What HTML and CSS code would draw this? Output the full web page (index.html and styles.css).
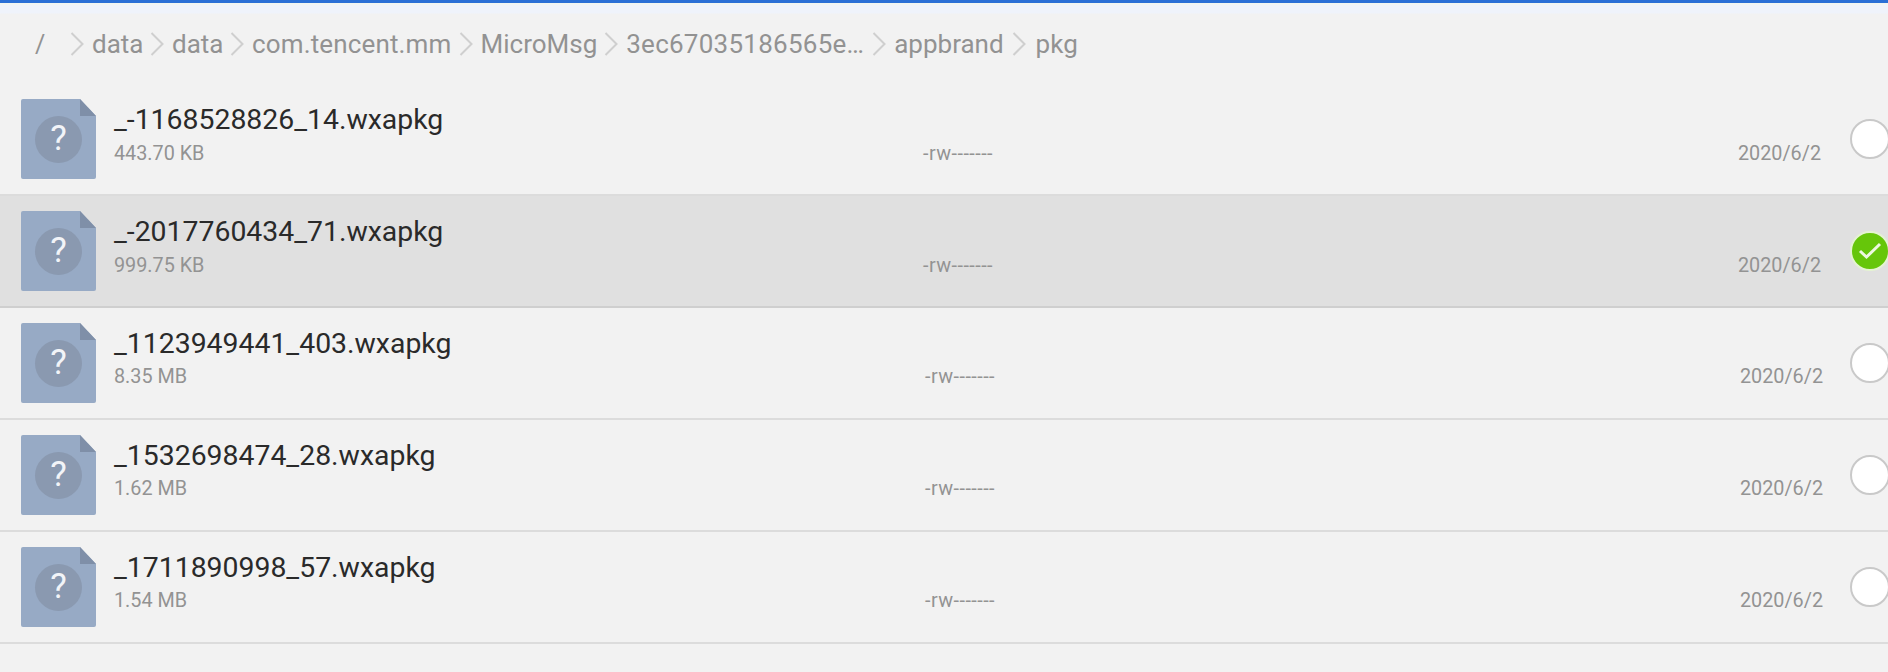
FILE: index.html
```html
<!DOCTYPE html>
<html lang="en">
<head>
<meta charset="utf-8">
<title>pkg</title>
<link rel="stylesheet" href="styles.css">
</head>
<body>
<svg class="defs" width="0" height="0" aria-hidden="true">
  <defs>
    <symbol id="chev" viewBox="0 0 14 24"><path d="M1.5 1 L12.5 12 L1.5 23" fill="none" stroke="#cfcfcf" stroke-width="2"/></symbol>
    <symbol id="file" viewBox="0 0 75 80">
      <path d="M2 0H59L75 17V78a2 2 0 0 1-2 2H2a2 2 0 0 1-2-2V2a2 2 0 0 1 2-2Z" fill="#97aac5"/>
      <path d="M59 0L75 17H59Z" fill="#7f8fa8"/>
      <circle cx="37.5" cy="40.500" r="23.500" fill="#8a99b0"/>
    </symbol>
  </defs>
</svg>
<header class="crumbs">
  <span class="root">/</span>
  <svg class="chev"><use href="#chev"/></svg><span>data</span>
  <svg class="chev tight"><use href="#chev"/></svg><span>data</span>
  <svg class="chev tight"><use href="#chev"/></svg><span class="wide">com.tencent.mm</span>
  <svg class="chev near"><use href="#chev"/></svg><span>MicroMsg</span>
  <svg class="chev near"><use href="#chev"/></svg><span class="wider">3ec67035186565e…</span>
  <svg class="chev far"><use href="#chev"/></svg><span>appbrand</span>
  <svg class="chev"><use href="#chev"/></svg><span class="last">pkg</span>
</header>
<main class="list">
  <div class="row">
    <div class="icon"><svg class="file"><use href="#file"/></svg><span class="q">?</span></div>
    <div class="info"><div class="name">_-1168528826_14.wxapkg</div>
      <div class="meta"><span class="size">443.70 KB</span><span class="perm">-rw-------</span><span class="date">2020/6/2</span></div></div>
    <div class="radio"></div>
  </div>
  <div class="row selected">
    <div class="icon"><svg class="file"><use href="#file"/></svg><span class="q">?</span></div>
    <div class="info"><div class="name">_-2017760434_71.wxapkg</div>
      <div class="meta"><span class="size">999.75 KB</span><span class="perm">-rw-------</span><span class="date">2020/6/2</span></div></div>
    <div class="radio checked"><svg viewBox="0 0 40 40" class="tick"><path d="M10 20L16.500 26L30 13" fill="none" stroke="#eef8e0" stroke-width="3"/></svg></div>
  </div>
  <div class="row shifted">
    <div class="icon"><svg class="file"><use href="#file"/></svg><span class="q">?</span></div>
    <div class="info"><div class="name">_1123949441_403.wxapkg</div>
      <div class="meta"><span class="size">8.35 MB</span><span class="perm">-rw-------</span><span class="date">2020/6/2</span></div></div>
    <div class="radio"></div>
  </div>
  <div class="row shifted">
    <div class="icon"><svg class="file"><use href="#file"/></svg><span class="q">?</span></div>
    <div class="info"><div class="name">_1532698474_28.wxapkg</div>
      <div class="meta"><span class="size">1.62 MB</span><span class="perm">-rw-------</span><span class="date">2020/6/2</span></div></div>
    <div class="radio"></div>
  </div>
  <div class="row shifted">
    <div class="icon"><svg class="file"><use href="#file"/></svg><span class="q">?</span></div>
    <div class="info"><div class="name">_1711890998_57.wxapkg</div>
      <div class="meta"><span class="size">1.54 MB</span><span class="perm">-rw-------</span><span class="date">2020/6/2</span></div></div>
    <div class="radio"></div>
  </div>
</main>
</body>
</html>
```
FILE: styles.css
```css
* { box-sizing: border-box; }
html, body { margin: 0; height: 100%; }
body {
  width: 1888px;
  height: 672px;
  overflow: hidden;
  background: #f2f2f2;
  font-family: Roboto, "Liberation Sans", sans-serif;
}
.defs { display: block; height: 0; }
.crumbs {
  height: 84px;
  border-top: 3px solid #2a6fd6;
  background: linear-gradient(#f3f6ee 0, #eff3fb 3px, #eff3fb 10px, #f2f2f2 11px);
  padding: 1px 0 0 35px;
  display: flex;
  align-items: center;
  gap: 8px;
  font-size: 26px;
  color: #929292;
  white-space: nowrap;
}
.root { width: 27px; font-size: 25px; }
.chev { width: 14px; height: 24px; flex: none; }
.chev.tight { margin-left: -1.5px; }
.chev.near { margin-left: -1px; }
.chev.far { margin-left: 0; }
.wide { letter-spacing: 0.15px; }
.wider { letter-spacing: 0.25px; }
.last { margin-left: 2px; }
.row {
  height: 112px;
  display: flex;
  align-items: flex-start;
  padding: 15px 0 0 21px;
  border-bottom: 2px solid #dcdcdc;
  position: relative;
}
.row.selected { background: #e0e0e0; border-bottom-color: #cfcfcf; }
.icon { width: 75px; height: 80px; position: relative; flex: none; }
.file { width: 75px; height: 80px; display: block; }
.q {
  position: absolute;
  left: 0; right: 0; top: 20px;
  text-align: center;
  font-size: 35px;
  line-height: 40px;
  color: #f2f4f8;
}
.info { margin-left: 18px; width: 1707px; padding-top: 2px; flex: none; }
.name { font-size: 28.4px; line-height: 38px; color: #2a2a2a; white-space: nowrap; }
.meta {
  display: grid;
  grid-template-columns: 1fr auto;
  position: relative;
  margin-top: 3px;
  font-size: 19.8px;
  line-height: 24px;
  color: #939393;
  height: 24px;
}
.perm { position: absolute; left: 809px; top: 0; letter-spacing: 0.45px; }
.date { justify-self: end; }
.shifted .meta { margin-top: 2px; }
.shifted .perm { left: 811px; }
.shifted .date { margin-right: -2px; }
.radio {
  position: absolute;
  left: 1850px;
  top: 35px;
  width: 40px;
  height: 40px;
  border-radius: 50%;
  background: #fff;
  border: 2px solid #c9c9c9;
}
.radio.checked { background: #66c60a; border-color: #e4f3d2; }
.tick { position: absolute; left: -2px; top: -2px; width: 40px; height: 40px; }
```
